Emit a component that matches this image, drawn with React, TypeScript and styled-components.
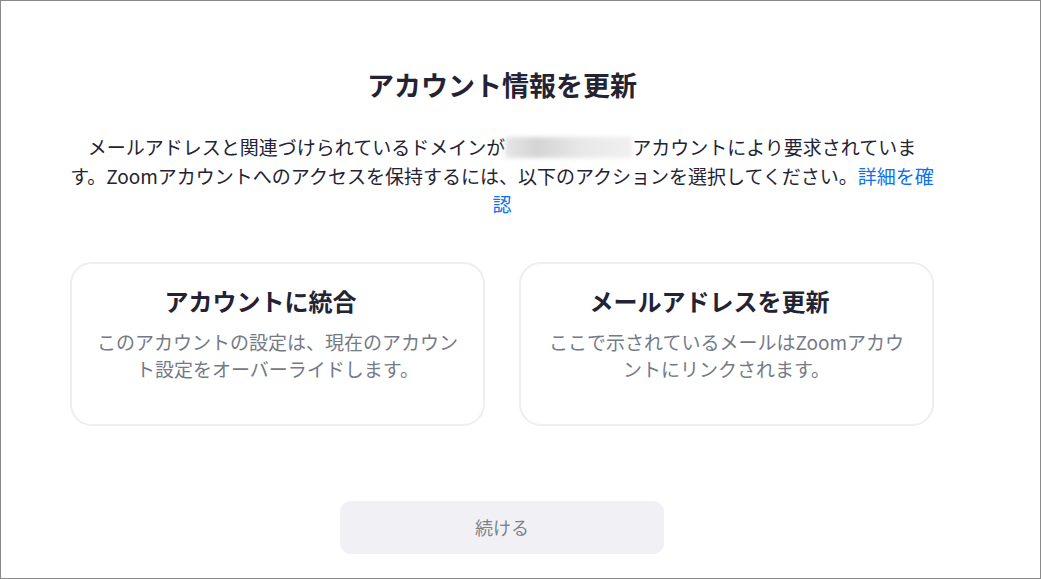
import React from "react";
import styled, { createGlobalStyle } from "styled-components";

const GlobalStyle = createGlobalStyle`
  html, body {
    margin: 0;
    padding: 0;
    background: #ffffff;
  }
  body {
    font-family: "Noto Sans CJK JP", "Noto Sans", sans-serif;
    color: #232333;
  }
`;

const Frame = styled.div`
  box-sizing: border-box;
  width: 1041px;
  height: 579px;
  border: 1px solid #8a8a8a;
  padding: 64px 0 0 69px;
`;

const Content = styled.div`
  width: 864px;
  display: flex;
  flex-direction: column;
  align-items: center;
`;

const Title = styled.h1`
  margin: 0;
  font-size: 27px;
  line-height: 40px;
  font-weight: 700;
  color: #232333;
`;

const Lead = styled.p`
  margin: 28px 0 0;
  width: 864px;
  font-size: 19px;
  line-height: 28.5px;
  text-align: center;
  color: #232333;
`;

const Redacted = styled.span`
  display: inline-block;
  width: 127px;
  height: 21px;
  vertical-align: -3px;
  background: linear-gradient(90deg, #e6e6e6 0%, #d4d4d4 25%, #e8e8e8 60%, #f0f0f0 100%);
  filter: blur(2px);
`;

const MoreLink = styled.a`
  color: #0e72ed;
  text-decoration: none;
`;

const Options = styled.div`
  margin-top: 43px;
  width: 864px;
  display: grid;
  grid-template-columns: 415px 415px;
  column-gap: 34px;
`;

const Card = styled.div`
  box-sizing: border-box;
  height: 164px;
  border: 2px solid #ededf2;
  border-radius: 22px;
  padding: 19px 16px 0;
  display: flex;
  flex-direction: column;
  align-items: center;
  cursor: pointer;
`;

const CardTitle = styled.div`
  margin-right: 34px;
  font-size: 24px;
  line-height: 36px;
  font-weight: 700;
  color: #232333;
`;

const CardText = styled.div`
  margin-top: 9px;
  font-size: 19px;
  line-height: 27px;
  text-align: center;
  color: #747a86;
`;

const Continue = styled.button`
  margin-top: 75px;
  width: 324px;
  height: 53px;
  border: none;
  border-radius: 11px;
  background: #f1f1f5;
  color: #7c828c;
  font-family: "Noto Sans CJK JP", "Noto Sans", sans-serif;
  font-size: 18px;
`;

const options = [
  {
    title: "アカウントに統合",
    lines: ["このアカウントの設定は、現在のアカウン", "ト設定をオーバーライドします。"],
  },
  {
    title: "メールアドレスを更新",
    lines: ["ここで示されているメールはZoomアカウ", "ントにリンクされます。"],
  },
];

export default function App() {
  return (
    <>
      <GlobalStyle />
      <Frame>
        <Content>
          <Title>アカウント情報を更新</Title>
          <Lead>
            メールアドレスと関連づけられているドメインが<Redacted />アカウントにより要求されています。Zoomアカウントへのアクセスを保持するには、以下のアクションを選択してください。
            <MoreLink href="#">詳細を確認</MoreLink>
          </Lead>
          <Options>
            {options.map((o) => (
              <Card key={o.title}>
                <CardTitle>{o.title}</CardTitle>
                <CardText>
                  {o.lines[0]}
                  <br />
                  {o.lines[1]}
                </CardText>
              </Card>
            ))}
          </Options>
          <Continue disabled>続ける</Continue>
        </Content>
      </Frame>
    </>
  );
}
